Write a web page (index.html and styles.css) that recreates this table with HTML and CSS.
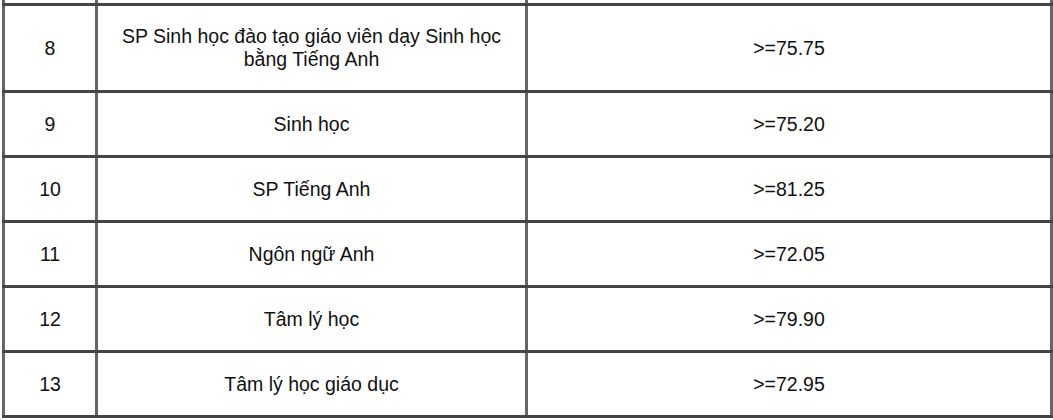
FILE: index.html
```html
<!DOCTYPE html>
<html>
<head>
<meta charset="utf-8">
<link rel="stylesheet" href="styles.css">
</head>
<body>
<table class="scores">
  <colgroup>
    <col class="c-no">
    <col class="c-name">
    <col class="c-score">
  </colgroup>
  <tbody>
    <tr class="cut"><td></td><td></td><td></td></tr>
    <tr class="tall"><td>8</td><td>SP Sinh học đào tạo giáo viên dạy Sinh học<br>bằng Tiếng Anh</td><td>&gt;=75.75</td></tr>
    <tr><td>9</td><td>Sinh học</td><td>&gt;=75.20</td></tr>
    <tr><td>10</td><td>SP Tiếng Anh</td><td>&gt;=81.25</td></tr>
    <tr><td>11</td><td>Ngôn ngữ Anh</td><td>&gt;=72.05</td></tr>
    <tr><td>12</td><td>Tâm lý học</td><td>&gt;=79.90</td></tr>
    <tr><td>13</td><td>Tâm lý học giáo dục</td><td>&gt;=72.95</td></tr>
  </tbody>
</table>
</body>
</html>
```

FILE: styles.css
```css
html, body {
  margin: 0;
  padding: 0;
  background: #ffffff;
}
body {
  padding-left: 2px;
  font-family: "Liberation Sans", Arial, sans-serif;
  color: #111111;
}
.scores {
  border-collapse: collapse;
  table-layout: fixed;
  width: 1048px;
}
.c-no { width: 93px; }
.c-name { width: 430px; }
.c-score { width: 525px; }
.scores td {
  border: 3px solid #444444;
  border-left-color: #666666;
  border-right-color: #666666;
  text-align: center;
  vertical-align: middle;
  font-size: 19.5px;
  line-height: 23px;
  padding: 0 2px;
  height: 62px;
}
.scores tr.cut td {
  border-top: none;
  height: 3px;
  padding: 0;
}
.scores tr.tall td {
  height: 84px;
}
```
